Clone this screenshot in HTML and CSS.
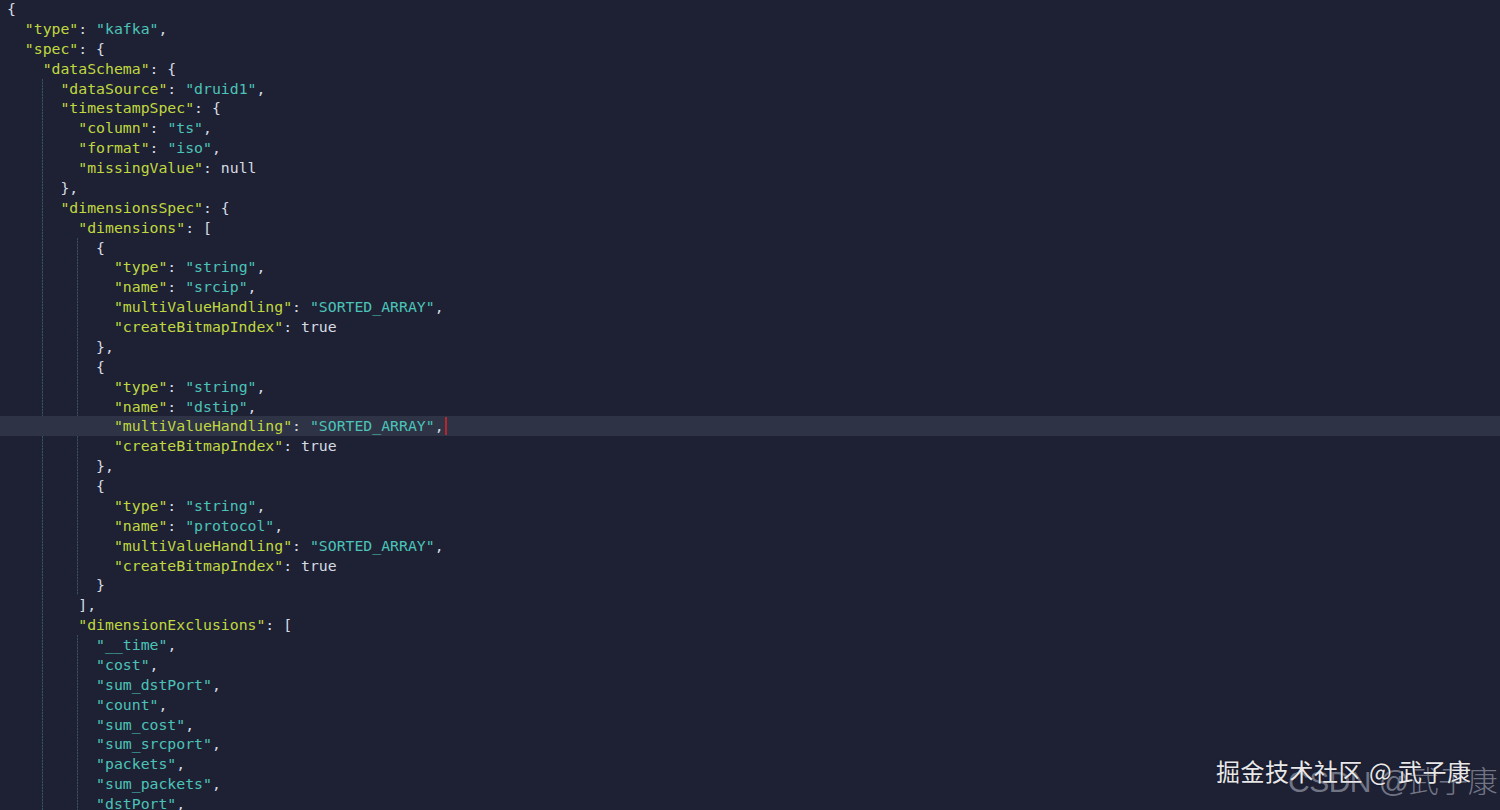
FILE: index.html
```html
<!DOCTYPE html>
<html lang="zh">
<head>
<meta charset="utf-8">
<title>kafka spec</title>
<link rel="stylesheet" href="styles.css">
</head>
<body>
<main class="editor">
<div class="ln"><span class="p">{</span></div>
<div class="ln">  <span class="k">"type"</span><span class="p">: </span><span class="s">"kafka"</span><span class="p">,</span></div>
<div class="ln">  <span class="k">"spec"</span><span class="p">: {</span></div>
<div class="ln">    <span class="k">"dataSchema"</span><span class="p">: {</span></div>
<div class="blk guide4">
<div class="ln">      <span class="k">"dataSource"</span><span class="p">: </span><span class="s">"druid1"</span><span class="p">,</span></div>
<div class="ln">      <span class="k">"timestampSpec"</span><span class="p">: {</span></div>
<div class="ln">        <span class="k">"column"</span><span class="p">: </span><span class="s">"ts"</span><span class="p">,</span></div>
<div class="ln">        <span class="k">"format"</span><span class="p">: </span><span class="s">"iso"</span><span class="p">,</span></div>
<div class="ln">        <span class="k">"missingValue"</span><span class="p">: null</span></div>
<div class="ln">      <span class="p">},</span></div>
<div class="ln">      <span class="k">"dimensionsSpec"</span><span class="p">: {</span></div>
<div class="ln">        <span class="k">"dimensions"</span><span class="p">: [</span></div>
<div class="blk guide8">
<div class="ln">          <span class="p">{</span></div>
<div class="ln">            <span class="k">"type"</span><span class="p">: </span><span class="s">"string"</span><span class="p">,</span></div>
<div class="ln">            <span class="k">"name"</span><span class="p">: </span><span class="s">"srcip"</span><span class="p">,</span></div>
<div class="ln">            <span class="k">"multiValueHandling"</span><span class="p">: </span><span class="s">"SORTED_ARRAY"</span><span class="p">,</span></div>
<div class="ln">            <span class="k">"createBitmapIndex"</span><span class="p">: true</span></div>
<div class="ln">          <span class="p">},</span></div>
<div class="ln">          <span class="p">{</span></div>
<div class="ln">            <span class="k">"type"</span><span class="p">: </span><span class="s">"string"</span><span class="p">,</span></div>
<div class="ln">            <span class="k">"name"</span><span class="p">: </span><span class="s">"dstip"</span><span class="p">,</span></div>
<div class="ln current">            <span class="k">"multiValueHandling"</span><span class="p">: </span><span class="s">"SORTED_ARRAY"</span><span class="p">,</span><span class="cursor"></span></div>
<div class="ln">            <span class="k">"createBitmapIndex"</span><span class="p">: true</span></div>
<div class="ln">          <span class="p">},</span></div>
<div class="ln">          <span class="p">{</span></div>
<div class="ln">            <span class="k">"type"</span><span class="p">: </span><span class="s">"string"</span><span class="p">,</span></div>
<div class="ln">            <span class="k">"name"</span><span class="p">: </span><span class="s">"protocol"</span><span class="p">,</span></div>
<div class="ln">            <span class="k">"multiValueHandling"</span><span class="p">: </span><span class="s">"SORTED_ARRAY"</span><span class="p">,</span></div>
<div class="ln">            <span class="k">"createBitmapIndex"</span><span class="p">: true</span></div>
<div class="ln">          <span class="p">}</span></div>
</div>
<div class="ln">        <span class="p">],</span></div>
<div class="ln">        <span class="k">"dimensionExclusions"</span><span class="p">: [</span></div>
<div class="blk guide8">
<div class="ln">          <span class="s">"__time"</span><span class="p">,</span></div>
<div class="ln">          <span class="s">"cost"</span><span class="p">,</span></div>
<div class="ln">          <span class="s">"sum_dstPort"</span><span class="p">,</span></div>
<div class="ln">          <span class="s">"count"</span><span class="p">,</span></div>
<div class="ln">          <span class="s">"sum_cost"</span><span class="p">,</span></div>
<div class="ln">          <span class="s">"sum_srcport"</span><span class="p">,</span></div>
<div class="ln">          <span class="s">"packets"</span><span class="p">,</span></div>
<div class="ln">          <span class="s">"sum_packets"</span><span class="p">,</span></div>
<div class="ln">          <span class="s">"dstPort"</span><span class="p">,</span></div>
</div>
</div>
</main>
<div class="watermark">
<span class="wm-csdn">CSDN @武子康</span>
<span class="wm-juejin">掘金技术社区 @ 武子康</span>
</div>
</body>
</html>
```
FILE: styles.css
```css
html, body {
  margin: 0;
  padding: 0;
  background: #1e2134;
  height: 100%;
  overflow: hidden;
}

.editor {
  font-family: "DejaVu Sans Mono", "Liberation Mono", monospace;
  font-size: 14.8px;
  line-height: 19.875px;
  color: #d6dbe3;
  margin-top: -1px;
}

.ln {
  white-space: pre;
  padding-left: 7px;
  height: 19.875px;
}

.k { color: #c0d840; }
.s { color: #4cc3b8; }
.p { color: #d6dbe3; }

.guide4 {
  background-image: repeating-linear-gradient(to bottom, #2d5661 0 2px, rgba(45,86,97,0.35) 2px 3px);
  background-repeat: no-repeat;
  background-size: 1px 100%;
  background-position: calc(7px + 4ch - 1px) 0;
}

.guide8 {
  background-image: repeating-linear-gradient(to bottom, #34505c 0 2px, rgba(52,80,92,0.35) 2px 3px);
  background-repeat: no-repeat;
  background-size: 1px 100%;
  background-position: calc(7px + 8ch - 1px) 0;
}

.current {
  background: #2e3346;
}

.cursor {
  display: inline-block;
  width: 2px;
  height: 18px;
  background: #b8252c;
  vertical-align: -4px;
  margin-left: 1px;
}

.watermark {
  position: absolute;
  right: 0;
  bottom: 0;
  width: 300px;
  height: 70px;
  font-family: "Noto Sans CJK SC", "Liberation Sans", sans-serif;
}

.wm-csdn {
  position: absolute;
  left: 88px;
  top: 17px;
  font-family: "Liberation Sans", "Noto Sans CJK SC", sans-serif;
  font-size: 30px;
  font-weight: 300;
  letter-spacing: -0.5px;
  color: rgba(185, 190, 202, 0.55);
  white-space: nowrap;
}

.wm-juejin {
  position: absolute;
  left: 16px;
  top: 13px;
  font-size: 24px;
  letter-spacing: 0.5px;
  color: #e8e8ea;
  white-space: nowrap;
  text-shadow: 0 0 2px rgba(0,0,0,0.5);
}
```
